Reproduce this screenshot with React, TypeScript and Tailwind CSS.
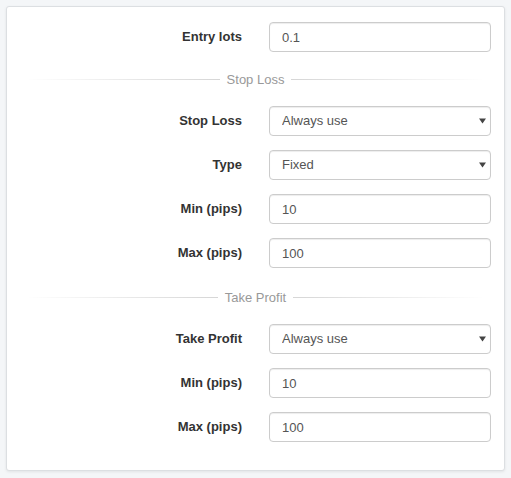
import React from 'react';

type Field = {
  label: string;
  value: string;
  kind: 'input' | 'select';
  options?: string[];
};

const ENTRY: Field[] = [{ label: 'Entry lots', value: '0.1', kind: 'input' }];

const STOP_LOSS: Field[] = [
  { label: 'Stop Loss', value: 'Always use', kind: 'select', options: ['Always use', 'Never use'] },
  { label: 'Type', value: 'Fixed', kind: 'select', options: ['Fixed', 'Random'] },
  { label: 'Min (pips)', value: '10', kind: 'input' },
  { label: 'Max (pips)', value: '100', kind: 'input' },
];

const TAKE_PROFIT: Field[] = [
  { label: 'Take Profit', value: 'Always use', kind: 'select', options: ['Always use', 'Never use'] },
  { label: 'Min (pips)', value: '10', kind: 'input' },
  { label: 'Max (pips)', value: '100', kind: 'input' },
];

function FormRow({ field }: { field: Field }) {
  return (
    <div className="flex items-center h-[30px]">
      <label className="w-[235px] pr-[0px] text-right text-[13px] font-bold text-[#333]">
        {field.label}
      </label>
      <div className="ml-[27px] w-[222px] h-[30px] relative">
        {field.kind === 'input' ? (
          <input
            defaultValue={field.value}
            className="w-full h-full px-[12px] text-[13px] text-[#555] bg-white border border-[#ccc] rounded-[4px] shadow-[inset_0_1px_1px_rgba(0,0,0,0.075)] outline-none"
          />
        ) : (
          <>
            <select
              defaultValue={field.value}
              className="w-full h-full pl-[12px] pr-[24px] text-[13px] text-[#555] bg-white border border-[#ccc] rounded-[4px] shadow-[inset_0_1px_1px_rgba(0,0,0,0.075)] outline-none appearance-none"
            >
              {field.options?.map((o) => (
                <option key={o}>{o}</option>
              ))}
            </select>
            {/* dropdown arrow */}
            <svg
              className="absolute right-[5px] top-[12px] pointer-events-none"
              width="7"
              height="6"
              viewBox="0 0 7 6"
            >
              <path d="M0 0.5h7L3.5 5.5z" fill="#444" />
            </svg>
          </>
        )}
      </div>
    </div>
  );
}

function Divider({ title }: { title: string }) {
  return (
    <div className="flex items-center h-[14px] px-[19px]">
      <div className="flex-1 h-px bg-gradient-to-r from-transparent to-[#d6d6d6]" />
      <span className="px-[7px] text-[13px] leading-none text-[#999]">{title}</span>
      <div className="flex-1 h-px bg-gradient-to-l from-transparent to-[#d6d6d6]" />
    </div>
  );
}

export default function App() {
  return (
    <div
      className="w-[511px] h-[478px] bg-[#f4f6f8] pt-[6px] pl-[6px] overflow-hidden"
      style={{ fontFamily: '"Liberation Sans", Arial, sans-serif' }}
    >
      <div className="w-[499px] h-[465px] bg-white border border-[#dcdfe2] rounded-[3px] shadow-[0_1px_3px_rgba(0,0,0,0.08)] pt-[15px]">
        {ENTRY.map((f, i) => (
          <FormRow key={i} field={f} />
        ))}

        <div className="mt-[20px] mb-[20px]">
          <Divider title="Stop Loss" />
        </div>

        <div className="flex flex-col gap-[14px]">
          {STOP_LOSS.map((f, i) => (
            <FormRow key={i} field={f} />
          ))}
        </div>

        <div className="mt-[22px] mb-[20px]">
          <Divider title="Take Profit" />
        </div>

        <div className="flex flex-col gap-[14px]">
          {TAKE_PROFIT.map((f, i) => (
            <FormRow key={i} field={f} />
          ))}
        </div>
      </div>
    </div>
  );
}
